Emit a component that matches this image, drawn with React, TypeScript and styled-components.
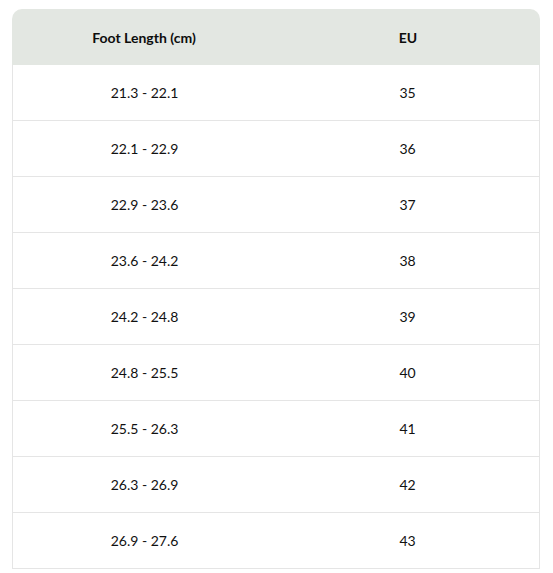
import styled, { createGlobalStyle } from 'styled-components';

const sizes = [
  ['21.3 - 22.1', '35'],
  ['22.1 - 22.9', '36'],
  ['22.9 - 23.6', '37'],
  ['23.6 - 24.2', '38'],
  ['24.2 - 24.8', '39'],
  ['24.8 - 25.5', '40'],
  ['25.5 - 26.3', '41'],
  ['26.3 - 26.9', '42'],
  ['26.9 - 27.6', '43'],
];

const App = () => {
  return (
    <Page>
      <GlobalStyle />
      <Table>
        <thead>
          <tr>
            <HeadCell>Foot Length (cm)</HeadCell>
            <HeadCell>EU</HeadCell>
          </tr>
        </thead>
        <tbody>
          {sizes.map(([length, eu]) => (
            <Row key={eu}>
              <Cell>{length}</Cell>
              <Cell>{eu}</Cell>
            </Row>
          ))}
        </tbody>
      </Table>
    </Page>
  );
};

export default App;

const GlobalStyle = createGlobalStyle`
  body {
    margin: 0;
    background: #ffffff;
    font-family: Lato, "Liberation Sans", sans-serif;
  }
`;

const Page = styled.div`
  padding: 9px 13px 0 12px;
`;

const Table = styled.table`
  width: 528px;
  border-collapse: separate;
  border-spacing: 0;
  table-layout: fixed;
`;

const HeadCell = styled.th`
  height: 56px;
  padding: 0;
  background: #e3e7e2;
  color: #0d0d0d;
  font-size: 14px;
  font-weight: 700;
  text-align: center;
  vertical-align: middle;

  &:first-child {
    border-top-left-radius: 10px;
  }
  &:last-child {
    border-top-right-radius: 10px;
  }
`;

const Row = styled.tr``;

const Cell = styled.td`
  height: 55px;
  padding: 0;
  border-bottom: 1px solid #e5e5e5;
  color: #111111;
  font-size: 14px;
  text-align: center;
  vertical-align: middle;

  &:first-child {
    border-left: 1px solid #e5e5e5;
  }
  &:last-child {
    border-right: 1px solid #e5e5e5;
  }
`;
